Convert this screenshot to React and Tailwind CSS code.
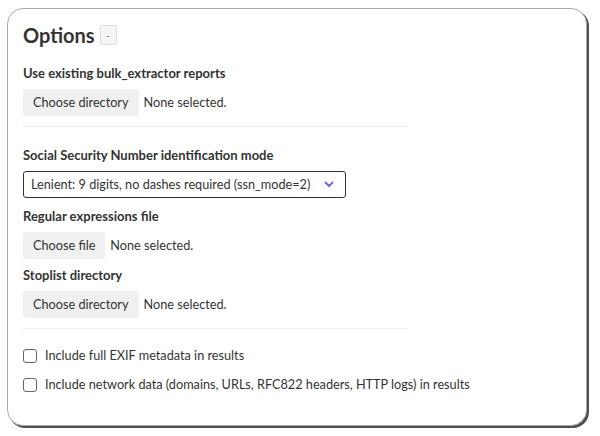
export default function App() {
  return (
    <div className="w-[600px] h-[436px] bg-white pt-[8px] pl-[7px]" style={{ fontFamily: '"Lato", "Noto Sans", sans-serif' }}>
      <div className="w-[580px] h-[418px] rounded-[16px] border border-[#a8a8a8] shadow-[2px_2px_0_#505050] bg-white px-[15px] pt-[13px] text-[#333] text-[12.7px]">
        <div className="flex items-center gap-[5px] h-[26px]">
          <h2 className="text-[20px] font-bold leading-none">Options</h2>
          <button className="w-[17px] h-[20px] border border-[#ddd] rounded-[2px] bg-[#f5f5f5] text-[9px] leading-none text-[#555]">-</button>
        </div>

        <div className="mt-[17px] text-[13px] font-bold leading-[16px]">Use existing bulk_extractor reports</div>
        <FileRow label="Choose directory" />
        <div className="w-[385px] h-px bg-[#eee] mt-[10px]" />

        <div className="mt-[20px] text-[13px] font-bold leading-[16px]">Social Security Number identification mode</div>
        <div className="mt-[8px] w-[323px] h-[27px] border border-[#333] rounded-[3px] flex items-center justify-between pl-[7px] pr-[11px]">
          <span>Lenient: 9 digits, no dashes required (ssn_mode=2)</span>
          <svg width="10" height="7" viewBox="0 0 10 7" fill="none">
            <path d="M1.5 1.5 L5 5 L8.5 1.5" stroke="#7b5ce0" strokeWidth="1.8" strokeLinecap="round" strokeLinejoin="round" />
          </svg>
        </div>

        <div className="mt-[10px] text-[13px] font-bold leading-[16px]">Regular expressions file</div>
        <FileRow label="Choose file" />

        <div className="mt-[8px] text-[13px] font-bold leading-[16px]">Stoplist directory</div>
        <FileRow label="Choose directory" />
        <div className="w-[385px] h-px bg-[#eee] mt-[10px]" />

        <label className="mt-[19px] h-[16px] flex items-center gap-[8px]">
          <span className="w-[14px] h-[14px] border border-[#666] rounded-[3px] bg-white" />
          <span>Include full EXIF metadata in results</span>
        </label>
        <label className="mt-[13px] h-[16px] flex items-center gap-[8px]">
          <span className="w-[14px] h-[14px] border border-[#666] rounded-[3px] bg-white" />
          <span>Include network data (domains, URLs, RFC822 headers, HTTP logs) in results</span>
        </label>
      </div>
    </div>
  );
}

function FileRow({ label }) {
  return (
    <div className="mt-[8px] flex items-center gap-[5px]">
      <button className="h-[27px] px-[10px] rounded-[3px] bg-[#f0f0f0] text-[#333]">{label}</button>
      <span>None selected.</span>
    </div>
  );
}
